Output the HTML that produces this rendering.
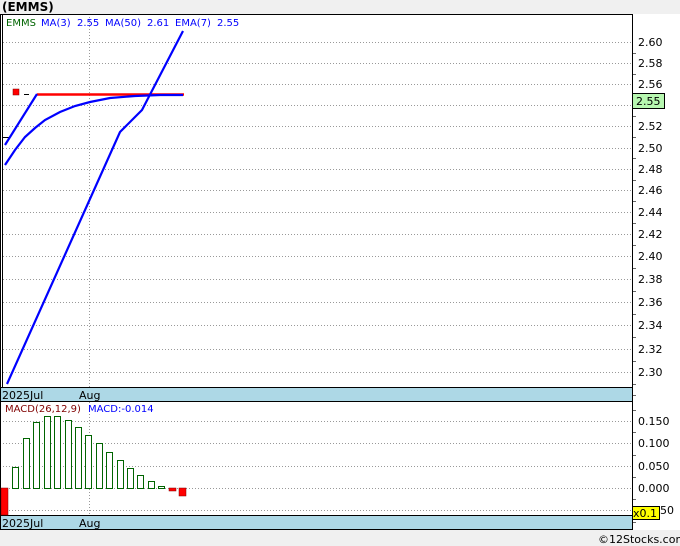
<!DOCTYPE html>
<html><head><style>
body{margin:0;width:680px;height:546px;background:#f0f0f0;font-family:"DejaVu Sans","Liberation Sans",sans-serif;overflow:hidden}
svg{display:block}
</style></head><body>
<svg width="680" height="546" xmlns="http://www.w3.org/2000/svg" font-family="DejaVu Sans, Liberation Sans, sans-serif" font-size="11">
<rect x="0" y="0" width="680" height="546" fill="#f0f0f0"/>
<text x="2" y="11" font-weight="bold" font-size="12" fill="#000">(EMMS)</text>
<rect x="0" y="14" width="680" height="516" fill="#fff"/>
<g stroke="#999" stroke-dasharray="1,2" stroke-width="1">
<line x1="0" y1="42.5" x2="632" y2="42.5"/><line x1="0" y1="63.5" x2="632" y2="63.5"/><line x1="0" y1="84.5" x2="632" y2="84.5"/><line x1="0" y1="105.5" x2="632" y2="105.5"/><line x1="0" y1="126.5" x2="632" y2="126.5"/><line x1="0" y1="148.5" x2="632" y2="148.5"/><line x1="0" y1="169.5" x2="632" y2="169.5"/><line x1="0" y1="190.5" x2="632" y2="190.5"/><line x1="0" y1="212.5" x2="632" y2="212.5"/><line x1="0" y1="234.5" x2="632" y2="234.5"/><line x1="0" y1="256.5" x2="632" y2="256.5"/><line x1="0" y1="279.5" x2="632" y2="279.5"/><line x1="0" y1="302.5" x2="632" y2="302.5"/><line x1="0" y1="325.5" x2="632" y2="325.5"/><line x1="0" y1="349.5" x2="632" y2="349.5"/><line x1="0" y1="372.5" x2="632" y2="372.5"/>
<line x1="89.5" y1="14" x2="89.5" y2="387"/>
<line x1="0" y1="421.5" x2="632" y2="421.5"/><line x1="0" y1="443.5" x2="632" y2="443.5"/><line x1="0" y1="466.5" x2="632" y2="466.5"/><line x1="0" y1="488.5" x2="632" y2="488.5"/><line x1="0" y1="510.5" x2="632" y2="510.5"/>
<line x1="89.5" y1="402" x2="89.5" y2="515"/>
</g>
<g stroke="#000" fill="none">
<rect x="0.5" y="14.5" width="632" height="515"/>
<line x1="632.5" y1="14" x2="632.5" y2="530"/>
<line x1="0" y1="387.5" x2="632" y2="387.5"/><line x1="0" y1="401.5" x2="632" y2="401.5"/>
<line x1="0" y1="515.5" x2="632" y2="515.5"/>
<line x1="2.5" y1="14" x2="2.5" y2="387"/>
</g>
<g stroke="#666">
<line x1="633" y1="53.5" x2="636" y2="53.5"/><line x1="633" y1="74.5" x2="636" y2="74.5"/><line x1="633" y1="116.5" x2="636" y2="116.5"/><line x1="633" y1="137.5" x2="636" y2="137.5"/><line x1="633" y1="158.5" x2="636" y2="158.5"/><line x1="633" y1="180.5" x2="636" y2="180.5"/><line x1="633" y1="201.5" x2="636" y2="201.5"/><line x1="633" y1="223.5" x2="636" y2="223.5"/><line x1="633" y1="245.5" x2="636" y2="245.5"/><line x1="633" y1="268.5" x2="636" y2="268.5"/><line x1="633" y1="291.5" x2="636" y2="291.5"/><line x1="633" y1="314.5" x2="636" y2="314.5"/><line x1="633" y1="337.5" x2="636" y2="337.5"/><line x1="633" y1="361.5" x2="636" y2="361.5"/><line x1="633" y1="384.5" x2="636" y2="384.5"/><line x1="633" y1="395.5" x2="636" y2="395.5"/>
<line x1="633" y1="410.5" x2="636" y2="410.5"/><line x1="633" y1="432.5" x2="636" y2="432.5"/><line x1="633" y1="455.5" x2="636" y2="455.5"/><line x1="633" y1="477.5" x2="636" y2="477.5"/><line x1="633" y1="499.5" x2="636" y2="499.5"/><line x1="633" y1="522.5" x2="636" y2="522.5"/>
</g>
<rect x="1" y="388" width="631" height="13" fill="#add8e6"/>
<rect x="1" y="516" width="631" height="13" fill="#add8e6"/>
<text x="2" y="399" fill="#000">2025Jul</text><text x="79" y="399" fill="#000">Aug</text>
<text x="2" y="527" fill="#000">2025Jul</text><text x="79" y="527" fill="#000">Aug</text>
<g fill="#000">
<text x="638" y="46">2.60</text><text x="638" y="67">2.58</text><text x="638" y="88">2.56</text><text x="638" y="130">2.52</text><text x="638" y="152">2.50</text><text x="638" y="173">2.48</text><text x="638" y="194">2.46</text><text x="638" y="216">2.44</text><text x="638" y="238">2.42</text><text x="638" y="260">2.40</text><text x="638" y="283">2.38</text><text x="638" y="306">2.36</text><text x="638" y="329">2.34</text><text x="638" y="353">2.32</text><text x="638" y="376">2.30</text>
<text x="638" y="425">0.150</text><text x="638" y="447">0.100</text><text x="638" y="470">0.050</text><text x="638" y="492">0.000</text><text x="660" y="514">50</text>
</g>
<rect x="632.5" y="93.5" width="32" height="15" fill="#b7f7b0" stroke="#000"/>
<text x="636" y="105" fill="#000">2.55</text>
<rect x="632.5" y="506.5" width="27" height="13" fill="#ffff00" stroke="#000"/>
<text x="633" y="517" fill="#000">x0.1</text>
<g font-size="10">
<text x="6" y="26" fill="#006400">EMMS</text>
<text x="41" y="26" fill="#0000ff">MA(3)</text><text x="77" y="26" fill="#0000ff">2.55</text>
<text x="105" y="26" fill="#0000ff">MA(50)</text><text x="147" y="26" fill="#0000ff">2.61</text>
<text x="175" y="26" fill="#0000ff">EMA(7)</text><text x="217" y="26" fill="#0000ff">2.55</text>
<text x="5" y="412" fill="#800000">MACD(26,12,9)</text>
<text x="88" y="412" fill="#0000ff">MACD:-0.014</text>
</g>
<line x1="2" y1="137.5" x2="10" y2="137.5" stroke="#000"/>
<line x1="24" y1="94.5" x2="29" y2="94.5" stroke="#000"/>
<rect x="13" y="89" width="6" height="6" fill="#f00" stroke="#800000" stroke-width="0.5"/>
<line x1="37" y1="94.5" x2="184" y2="94.5" stroke="#f00" stroke-width="2.5"/>
<g stroke="#0000ff" stroke-width="2.2" fill="none">
<polyline points="5,145 37,94"/>
<polyline points="5,165 15,150 25,137 35,128 45,120 60,112 75,106 90,102 110,98 135,96 160,95 183,95"/>
<polyline points="7,384 120,132 142,110 183,31"/>
</g>
<rect x="1" y="488" width="7" height="27" fill="#f00" stroke="#800000" stroke-width="0.5"/>
<g fill="#fff" stroke="#006400" stroke-width="1">
<rect x="12.5" y="467.5" width="6" height="21"/><rect x="23.5" y="438.5" width="6" height="50"/><rect x="33.5" y="422.5" width="6" height="66"/><rect x="44.5" y="416.5" width="6" height="72"/><rect x="54.5" y="416.5" width="6" height="72"/><rect x="65.5" y="420.5" width="6" height="68"/><rect x="75.5" y="427.5" width="6" height="61"/><rect x="85.5" y="435.5" width="6" height="53"/><rect x="96.5" y="443.5" width="6" height="45"/><rect x="106.5" y="452.5" width="6" height="36"/><rect x="117.5" y="460.5" width="6" height="28"/><rect x="127.5" y="468.5" width="6" height="20"/><rect x="137.5" y="475.5" width="6" height="13"/><rect x="148.5" y="481.5" width="6" height="7"/><rect x="158.5" y="486.5" width="6" height="2"/>
</g>
<rect x="169" y="488" width="7" height="3" fill="#f00" stroke="#800000" stroke-width="0.5"/>
<rect x="179" y="488" width="7" height="8" fill="#f00" stroke="#800000" stroke-width="0.5"/>
<text x="598" y="543" fill="#000" font-size="11">©12Stocks.com</text>
</svg>
</body></html>
